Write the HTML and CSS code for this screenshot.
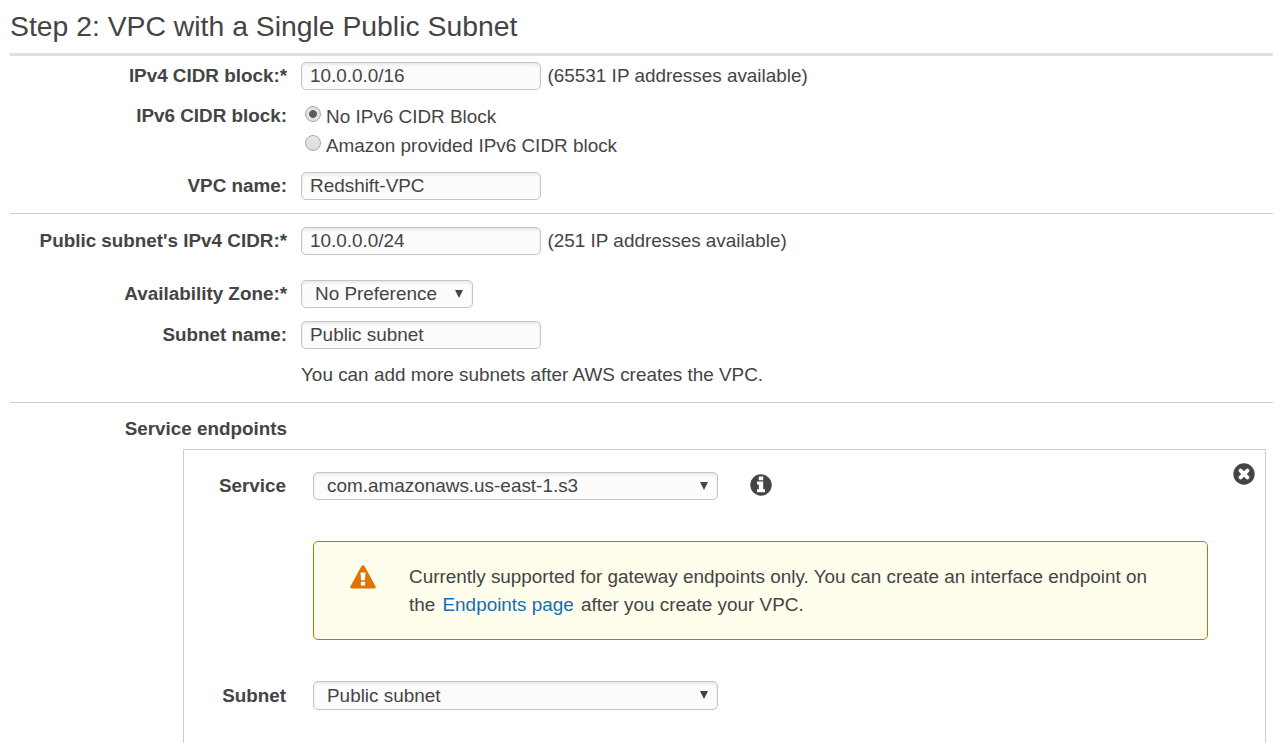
FILE: index.html
```html
<!DOCTYPE html>
<html lang="en">
<head>
<meta charset="utf-8">
<title>VPC with a Single Public Subnet</title>
<link rel="stylesheet" href="styles.css">
</head>
<body>
<main class="page">
  <h1 class="title">Step 2: VPC with a Single Public Subnet</h1>
  <section class="group vpc">
    <div class="row">
      <label class="label" for="cidr">IPv4 CIDR block:*</label>
      <input class="input" id="cidr" type="text" value="10.0.0.0/16">
      <span class="hint">(65531 IP addresses available)</span>
    </div>
    <div class="row row-radios">
      <span class="label">IPv6 CIDR block:</span>
      <div class="radios">
        <label class="radio"><span class="dot checked"></span>No IPv6 CIDR Block</label>
        <label class="radio"><span class="dot"></span>Amazon provided IPv6 CIDR block</label>
      </div>
    </div>
    <div class="row">
      <label class="label" for="vpc-name">VPC name:</label>
      <input class="input" id="vpc-name" type="text" value="Redshift-VPC">
    </div>
  </section>
  <section class="group subnet">
    <div class="row">
      <label class="label" for="subnet-cidr">Public subnet's IPv4 CIDR:*</label>
      <input class="input" id="subnet-cidr" type="text" value="10.0.0.0/24">
      <span class="hint">(251 IP addresses available)</span>
    </div>
    <div class="row row-zone">
      <span class="label">Availability Zone:*</span>
      <div class="select zone"><span>No Preference</span><svg class="arrow" viewBox="0 0 8 8"><path d="M0 0h8L4 8z"/></svg></div>
    </div>
    <div class="row row-name">
      <label class="label" for="subnet-name">Subnet name:</label>
      <input class="input" id="subnet-name" type="text" value="Public subnet">
    </div>
    <p class="note">You can add more subnets after AWS creates the VPC.</p>
  </section>
  <section class="endpoints">
    <h2 class="label">Service endpoints</h2>
    <div class="panel">
      <div class="row row-service">
        <span class="label">Service</span>
        <div class="select wide"><span>com.amazonaws.us-east-1.s3</span><svg class="arrow" viewBox="0 0 8 8"><path d="M0 0h8L4 8z"/></svg></div>
        <svg class="info" viewBox="0 0 22 22"><circle cx="11" cy="11" r="10.7" fill="#444"/><path fill="#fff" d="M8.8 2.6h4.4v3.6H8.8zM7 7.6h6.2v7.6h1.8v3H7v-3h1.8v-4.6H7z"/></svg>
      </div>
      <svg class="close" viewBox="0 0 22 22"><circle cx="11" cy="11" r="10.7" fill="#444"/><path d="M7.6 7.6l6.8 6.8M14.4 7.6l-6.8 6.8" stroke="#fff" stroke-width="4" stroke-linecap="round"/></svg>
      <div class="alert">
        <svg class="warning" viewBox="0 0 26 24"><path fill="#df7500" d="M11.5.9q1.5-1.5 3 0L25.6 21.4q.7 1.8-1.3 2.1H1.7Q-.3 23.2.4 21.4z"/><path fill="#fff" d="M10.5 7.5h5l-.6 7.8h-3.8zM10.9 16.8h4.2v3.8h-4.2z"/></svg>
        <p class="message">Currently supported for gateway endpoints only. You can create an interface endpoint on<br>the <a class="link" href="#">Endpoints page</a> after you create your VPC.</p>
      </div>
      <div class="row row-last">
        <span class="label">Subnet</span>
        <div class="select wide tall"><span>Public subnet</span><svg class="arrow" viewBox="0 0 8 8"><path d="M0 0h8L4 8z"/></svg></div>
      </div>
    </div>
  </section>
</main>
</body>
</html>
```
FILE: styles.css
```css
* { box-sizing: border-box; }

html, body { height: 100%; overflow: hidden; }

body {
  margin: 0;
  background: #fff;
  color: #444;
  font: 18.92px/28px "Liberation Sans", Arial, sans-serif;
}

.page { padding-left: 10px; }

.title {
  height: 56px;
  margin: 0;
  padding-top: 9px;
  border-bottom: 3px solid #e1e1e1;
  font-size: 28.35px;
  font-weight: 400;
  line-height: 34px;
}

.group { border-bottom: 1px solid #ccc; }
.vpc { height: 158px; padding-top: 6px; }
.subnet { height: 189px; padding-top: 13px; }

.row { display: flex; align-items: flex-start; }

.label {
  flex: none;
  width: 277px;
  margin: 0 14px 0 0;
  font-size: 18.85px;
  font-weight: 700;
  text-align: right;
  white-space: nowrap;
}

.input {
  width: 240px;
  height: 28px;
  margin: 0;
  padding: 0 8px 1px;
  color: #444;
  font: inherit;
  line-height: 25px;
}

.input, .select {
  border: 1px solid #c4c4c4;
  border-radius: 5px;
  background: #fcfcfc;
  box-shadow: inset 0 2px 3px #e9e9e9;
}

.hint { margin-left: 6.5px; }

.row-radios { height: 82px; padding-top: 12px; }
.radios { padding: 1px 0 0 4px; }
.radio { display: flex; height: 29px; }

.dot {
  width: 16px;
  height: 16px;
  margin: 3px 5px 0 0;
  border: 1px solid #aaa;
  border-radius: 50%;
  background: linear-gradient(#e8e8e8, #dcdcdc);
}

.checked { background: radial-gradient(circle, #5c5c5c 3.5px, #e3e3e3 4.3px); }

.row-zone { margin-top: 25px; }
.row-name { margin-top: 13px; }
.note { margin: 12px 0 0 291px; }

.select {
  display: flex;
  justify-content: space-between;
  height: 28px;
  padding: 0 9px 0 13px;
  line-height: 26px;
}

.zone { width: 172px; }
.wide { width: 405px; }
.tall { height: 29px; line-height: 27px; }
.arrow { width: 8px; height: 8px; margin-top: 9px; fill: #444; }

.endpoints { padding-top: 12px; }

.panel {
  position: relative;
  width: 1083px;
  height: 320px;
  margin: 6px 0 0 173px;
  padding: 22px 57px 0 0;
  border: 1px solid #ccc;
}

.panel .label { width: 102px; margin-right: 27px; }
.row-last .label { line-height: 29px; }
.info { width: 22px; height: 22px; margin: 2px 0 0 32px; }
.close { position: absolute; top: 12.5px; right: 10.5px; width: 22px; height: 22px; }

.alert {
  display: flex;
  height: 99px;
  margin: 41px 0 41px 129px;
  padding: 21px 35px;
  border: 1px solid #b9770e;
  border-radius: 5px;
  background: #fffdeb;
}

.warning { flex: none; width: 26px; height: 24px; margin: 2px 33.5px 0 .5px; }
.message { margin: 0; font-size: 18.9px; white-space: nowrap; }
.link { margin: 0 2px; color: #146eb4; text-decoration: none; }
```
